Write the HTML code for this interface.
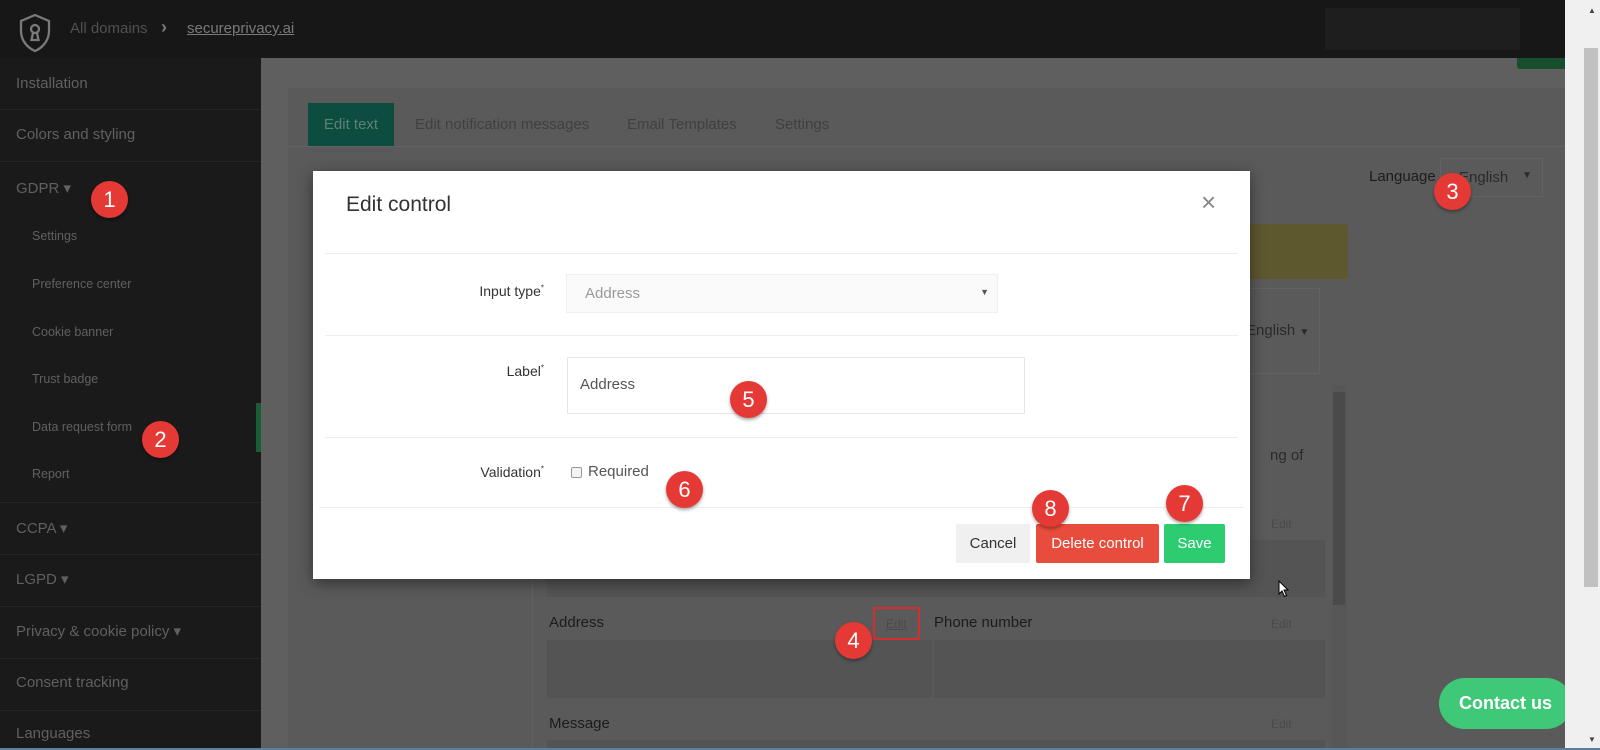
<!DOCTYPE html>
<html><head><meta charset="utf-8"><style>
*{box-sizing:border-box;margin:0;padding:0}
body{width:1600px;height:750px;overflow:hidden;position:relative;background:#5f5f5f;font-family:"Liberation Sans",sans-serif}
.a{position:absolute}
.top{left:0;top:0;width:1565px;height:58px;background:#181717}
.side{left:0;top:58px;width:261px;height:692px;background:#1a1a1a}
.si{position:absolute;left:16px;color:#606060;font-size:15px}
.ss{position:absolute;left:32px;color:#606060;font-size:12.5px}
.sep{position:absolute;left:0;width:261px;height:1px;background:#262626}
.badge{position:absolute;width:37px;height:37px;border-radius:50%;background:#e53935;color:#fff;font-size:22px;text-align:center;line-height:37px;box-shadow:0 2px 3px rgba(0,0,0,.35)}
.modal{left:313px;top:171px;width:937px;height:408px;background:#fff;box-shadow:0 4px 14px rgba(0,0,0,.45)}
.lbl{position:absolute;right:706px;font-size:14px;color:#333;text-align:right}
.hr{position:absolute;left:12px;right:12px;height:1px;background:#eee}
.btn{position:absolute;top:353px;height:39px;line-height:39px;text-align:center;font-size:15px;border-radius:2px}
.edit{position:absolute;color:#4a4a4a;font-size:12px}
.fld{position:absolute;background:#545454}
</style></head><body>
<div class="a top"></div>
<svg class="a" style="left:18px;top:13px" width="34" height="40" viewBox="0 0 34 40"><g fill="none" stroke="#7a7a7a" stroke-width="2.3"><path d="M17 2 L31 8 V18 C31 28 24 35 17 38 C10 35 3 28 3 18 V8 Z"/><circle cx="17" cy="16" r="4"/><path d="M15 20 L13.5 27 H20.5 L19 20"/></g></svg>
<div class="a" style="left:70px;top:20px;font-size:15px;color:#505050">All domains</div>
<div class="a" style="left:161px;top:17px;font-size:18px;color:#7a7a7a;font-weight:bold">&#8250;</div>
<div class="a" style="left:187px;top:20px;font-size:15px;color:#7a7a7a;text-decoration:underline">secureprivacy.ai</div>
<div class="a" style="left:1325px;top:8px;width:195px;height:42px;background:#1e1e1e"></div>
<div class="a side">
<div class="si" style="top:17px">Installation</div><div class="sep" style="top:51px"></div>
<div class="si" style="top:68px">Colors and styling</div><div class="sep" style="top:103px"></div>
<div class="si" style="top:121px">GDPR &#9662;</div>
<div class="ss" style="top:171px">Settings</div>
<div class="ss" style="top:219px">Preference center</div>
<div class="ss" style="top:267px">Cookie banner</div>
<div class="ss" style="top:314px">Trust badge</div>
<div class="ss" style="top:362px">Data request form</div>
<div class="ss" style="top:409px">Report</div>
<div class="sep" style="top:444px"></div>
<div class="si" style="top:461px">CCPA &#9662;</div><div class="sep" style="top:496px"></div>
<div class="si" style="top:512px">LGPD &#9662;</div><div class="sep" style="top:548px"></div>
<div class="si" style="top:564px">Privacy &amp; cookie policy &#9662;</div><div class="sep" style="top:600px"></div>
<div class="si" style="top:616px">Consent tracking</div><div class="sep" style="top:652px"></div>
<div class="si" style="top:667px">Languages</div>
<div style="position:absolute;left:256px;top:345px;width:5px;height:49px;background:#1a5e35"></div>
</div>
<div class="a" style="left:288px;top:88px;width:1277px;height:662px;background:#5a5a5a"></div>
<div class="a" style="left:1517px;top:58px;width:48px;height:11px;background:#174f2c;border-radius:0 0 0 3px"></div>
<div class="a" style="left:308px;top:103px;width:86px;height:43px;background:#0c4d3f;color:#5f8077;font-size:15px;line-height:43px;text-align:center">Edit text</div>
<div class="a" style="left:415px;top:116px;color:#404040;font-size:15px">Edit notification messages</div>
<div class="a" style="left:627px;top:116px;color:#404040;font-size:15px">Email Templates</div>
<div class="a" style="left:775px;top:116px;color:#404040;font-size:15px">Settings</div>
<div class="a" style="left:288px;top:146px;width:1277px;height:1px;background:#626262"></div>
<div class="a" style="left:1369px;top:168px;color:#1c1c1c;font-size:15px">Language</div>
<div class="a" style="left:1440px;top:158px;width:103px;height:39px;border:1px solid #626262;color:#2a2a2a;font-size:15px;padding:10px 0 0 18px">English<span style="position:absolute;right:10px;top:11px;font-size:10px">&#9660;</span></div>
<div class="a" style="left:1245px;top:224px;width:103px;height:55px;background:#5e582f;border-radius:4px"></div>
<div class="a" style="left:1245px;top:288px;width:75px;height:86px;border:1px solid #626262"></div>
<div class="a" style="left:1246px;top:322px;color:#2a2a2a;font-size:15px">English <span style="font-size:10px">&#9660;</span></div>
<div class="a" style="left:1270px;top:447px;color:#2a2a2a;font-size:15px">ng of</div>
<div class="a" style="left:532px;top:374px;width:815px;height:376px;border-left:1px solid #626262"></div>
<div class="a" style="left:1332px;top:385px;width:15px;height:365px;background:#575757"></div>
<div class="a" style="left:1333px;top:392px;width:12px;height:213px;background:#4a4a4a"></div>
<div class="fld" style="left:547px;top:540px;width:778px;height:57px"></div>
<div class="edit" style="left:1271px;top:517px">Edit</div>
<div class="a" style="left:549px;top:614px;color:#1c1c1c;font-size:15px">Address</div>
<div class="a" style="left:873px;top:607px;width:47px;height:33px;border:2px solid #d32f2f;border-radius:2px"></div>
<div class="edit" style="left:886px;top:617px;text-decoration:underline">Edit</div>
<div class="a" style="left:934px;top:614px;color:#1c1c1c;font-size:15px">Phone number</div>
<div class="edit" style="left:1271px;top:617px">Edit</div>
<div class="fld" style="left:547px;top:640px;width:385px;height:58px"></div>
<div class="fld" style="left:934px;top:640px;width:391px;height:58px"></div>
<div class="a" style="left:549px;top:715px;color:#1c1c1c;font-size:15px">Message</div>
<div class="edit" style="left:1271px;top:717px">Edit</div>
<div class="fld" style="left:547px;top:740px;width:778px;height:10px"></div>
<div class="a modal">
<div class="a" style="left:33px;top:22px;font-size:21px;color:#333">Edit control</div>
<div class="a" style="left:888px;top:16px;font-size:26px;color:#888">&#215;</div>
<div class="hr" style="top:82px"></div>
<div class="lbl" style="top:112px">Input type<sup style="font-size:8px">*</sup></div>
<div class="a" style="left:253px;top:103px;width:432px;height:39px;background:#fafafa;border:1px solid #f0f0f0;color:#999;font-size:15px;padding:10px 0 0 18px">Address<span style="position:absolute;right:8px;top:12px;font-size:9px;color:#555">&#9660;</span></div>
<div class="hr" style="top:164px"></div>
<div class="lbl" style="top:192px">Label<sup style="font-size:8px">*</sup></div>
<div class="a" style="left:254px;top:186px;width:458px;height:57px;border:1px solid #e6e6e6;color:#555;font-size:15px;padding:18px 0 0 12px">Address</div>
<div class="hr" style="top:266px"></div>
<div class="lbl" style="top:293px">Validation<sup style="font-size:8px">*</sup></div>
<div class="a" style="left:258px;top:296px;width:11px;height:11px;border:1px solid #999;border-radius:2px;background:#f4f4f4"></div>
<div class="a" style="left:275px;top:292px;font-size:15px;color:#555">Required</div>
<div class="hr" style="top:336px;left:6px;right:6px"></div>
<div class="btn" style="left:643px;width:74px;background:#f0f0f0;color:#333">Cancel</div>
<div class="btn" style="left:723px;width:123px;background:#e74c3c;color:#fff">Delete control</div>
<div class="btn" style="left:851px;width:61px;background:#2ecc71;color:#fff">Save</div>
</div>
<div class="badge" style="left:91px;top:181px">1</div>
<div class="badge" style="left:142px;top:421px">2</div>
<div class="badge" style="left:1434px;top:173px">3</div>
<div class="badge" style="left:835px;top:622px">4</div>
<div class="badge" style="left:730px;top:381px">5</div>
<div class="badge" style="left:666px;top:471px">6</div>
<div class="badge" style="left:1166px;top:485px">7</div>
<div class="badge" style="left:1032px;top:490px">8</div>
<svg class="a" style="left:1278px;top:580px" width="12" height="18" viewBox="0 0 12 18"><path d="M1 1 V14 L4 11 L6.5 16.5 L8.5 15.5 L6 10 H10 Z" fill="#fff" stroke="#000" stroke-width="1"/></svg>
<div class="a" style="left:1439px;top:678px;width:133px;height:51px;border-radius:26px;background:#3ec878;color:#fff;font-weight:bold;font-size:18px;text-align:center;line-height:51px">Contact us</div>
<div class="a" style="left:1565px;top:0;width:35px;height:750px;background:#f0f0f0"></div>
<div class="a" style="left:1584px;top:48px;width:14px;height:539px;background:#c1c1c1"></div>
<div class="a" style="left:1588px;top:6px;font-size:8px;color:#444">&#9650;</div>
<div class="a" style="left:1588px;top:735px;font-size:8px;color:#444">&#9660;</div>
<div class="a" style="left:0;top:748px;width:1600px;height:2px;background:#5a7fa5"></div>
</body></html>
